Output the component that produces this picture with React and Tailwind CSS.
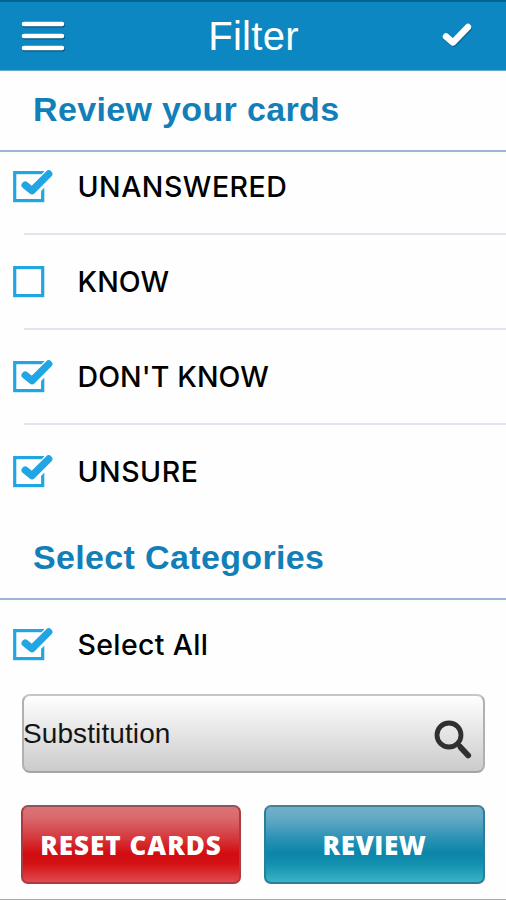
import { useState } from 'react';

const cardFilters = [
  { id: 'unanswered', label: 'UNANSWERED', tracking: 'tracking-[0.5px]' },
  { id: 'know', label: 'KNOW', tracking: 'tracking-[0.1px]' },
  { id: 'dontKnow', label: "DON'T KNOW", tracking: 'tracking-[0.1px]' },
  { id: 'unsure', label: 'UNSURE', tracking: 'tracking-[0.5px]' },
];

function Checkbox({ checked }) {
  return (
    <svg width="42" height="34" viewBox="0 0 42 34" fill="none" className="shrink-0">
      <rect x="3.7" y="2.6" width="28" height="28" stroke="#21a6e3" strokeWidth="3.2" />
      {checked && (
        <>
          <path d="M14 16L21.2 21.6L38.3 4.6" stroke="#fefefe" strokeWidth="11.5" strokeLinejoin="round" strokeLinecap="round" />
          <path d="M14.2 15.2L21 20.6L37.7 4" stroke="#21a6e3" strokeWidth="7.4" strokeLinejoin="round" strokeLinecap="round" />
        </>
      )}
    </svg>
  );
}

function CheckRow({ label, tracking, checked, onClick }) {
  return (
    <button onClick={onClick} className="flex h-[34px] w-full items-center gap-[24.5px] pl-[11px] text-left">
      <Checkbox checked={checked} />
      <span className={`font-['Inter',sans-serif] text-[28.5px] leading-[34px] font-medium whitespace-nowrap text-black ${tracking}`}>
        {label}
      </span>
    </button>
  );
}

function App() {
  const [selected, setSelected] = useState({ unanswered: true, know: false, dontKnow: true, unsure: true, all: true });

  const toggle = (id) => setSelected({ ...selected, [id]: !selected[id] });

  return (
    <div className="flex h-[900px] w-[506px] flex-col overflow-hidden border-b border-[#a9a9a9] bg-[#fefefe] font-['Liberation_Sans',Arial,sans-serif]">
      {/* Navbar */}
      <header className="grid h-[71px] shrink-0 grid-cols-[1fr_auto_1fr] items-center border-t-2 border-b border-t-[#05648f] border-b-[#5fa9d3] bg-[#0c87c1]">
        <button className="justify-self-start pl-5">
          <svg width="48" height="36" viewBox="0 0 48 36" fill="none">
            <path d="M4 6H42M4 18H42M4 30H42" transform="translate(0.8 1.2)" stroke="#07577f" strokeWidth="4.5" strokeLinecap="round" />
            <path d="M4 6H42M4 18H42M4 30H42" stroke="#fff" strokeWidth="4.5" strokeLinecap="round" />
          </svg>
        </button>
        <h1 className="pb-px pl-px text-[40px] leading-[44px] tracking-[0.3px] text-white">Filter</h1>
        <button className="justify-self-end pr-[32px]">
          <svg width="34" height="28" viewBox="0 0 34 28" fill="none">
            <path d="M6 14.5L13 20.5L28 5" transform="translate(0.8 1.2)" stroke="#07679a" strokeWidth="6.4" strokeLinejoin="round" strokeLinecap="round" />
            <path d="M6 14.5L13 20.5L28 5" stroke="#fff" strokeWidth="6.4" strokeLinejoin="round" strokeLinecap="round" />
          </svg>
        </button>
      </header>

      {/* Card status */}
      <h2 className="h-[81px] shrink-0 border-b-2 border-[#9db3d8] pt-[18px] pl-[33px] text-[34px] leading-[40px] font-bold tracking-[0.35px] text-[#127fb9]">
        Review your cards
      </h2>
      <div className="flex h-[367px] shrink-0 flex-col pt-[18px]">
        {cardFilters.map((item, index) => (
          <div key={item.id} className="flex h-[95px] shrink-0 flex-col justify-between">
            <CheckRow label={item.label} tracking={item.tracking} checked={selected[item.id]} onClick={() => toggle(item.id)} />
            {index < cardFilters.length - 1 && <div className="mb-[30px] ml-6 h-[2px] bg-[#e0e4ed]" />}
          </div>
        ))}
      </div>

      {/* Categories */}
      <h2 className="h-[81px] shrink-0 border-b-2 border-[#9db3d8] pt-[18px] pl-[33px] text-[34px] leading-[40px] font-bold tracking-[0.35px] text-[#127fb9]">
        Select Categories
      </h2>
      <div className="pt-[28px]">
        <CheckRow label="Select All" tracking="tracking-[0.35px]" checked={selected.all} onClick={() => toggle('all')} />
      </div>

      <button className="mt-8 ml-[22px] flex h-[79px] w-[463px] shrink-0 items-center justify-between rounded-[8px] border-2 border-t-[#c6c6c6] border-r-[#b0b0b0] border-b-[#a5a5a5] border-l-[#b0b0b0] bg-linear-to-b from-white to-[#cbcbcb] pr-[9px]">
        <span className="-ml-px text-[28px] leading-8 tracking-[0.1px] text-[#151515]">Substitution</span>
        <svg width="42" height="42" viewBox="0 0 42 42" fill="none" className="mt-[12px]">
          <circle cx="17" cy="16" r="12" stroke="#303030" strokeWidth="4.8" />
          <path d="M25 24L29 28" stroke="#303030" strokeWidth="4" />
          <path d="M28.5 28.2L36.2 36.4" stroke="#303030" strokeWidth="5.8" strokeLinecap="round" />
        </svg>
      </button>

      {/* Actions */}
      <div className="mt-8 flex gap-[23px] pl-[21px] font-['Open_Sans',sans-serif] text-[26px] font-bold text-white">
        <button className="h-[79px] w-[220px] rounded-[7px] border-2 border-[#a83c42] border-t-[#8b555c] bg-[linear-gradient(180deg,#dc7376_0%,#d9686b_15%,#d5373b_42%,#d20c11_62%,#d31216_76%,#e04a4e_100%)] pt-px font-extrabold tracking-[1px] whitespace-nowrap">
          RESET CARDS
        </button>
        <button className="h-[79px] w-[221px] rounded-[7px] border-2 border-[#2b7e99] border-t-[#4a8095] bg-[linear-gradient(180deg,#72b0cb_0%,#62a9c6_15%,#2b92b5_42%,#0b85a9_62%,#1490b0_76%,#3ab3c6_100%)] pt-px font-extrabold tracking-[0.6px]">
          REVIEW
        </button>
      </div>
    </div>
  );
}

export default App;
